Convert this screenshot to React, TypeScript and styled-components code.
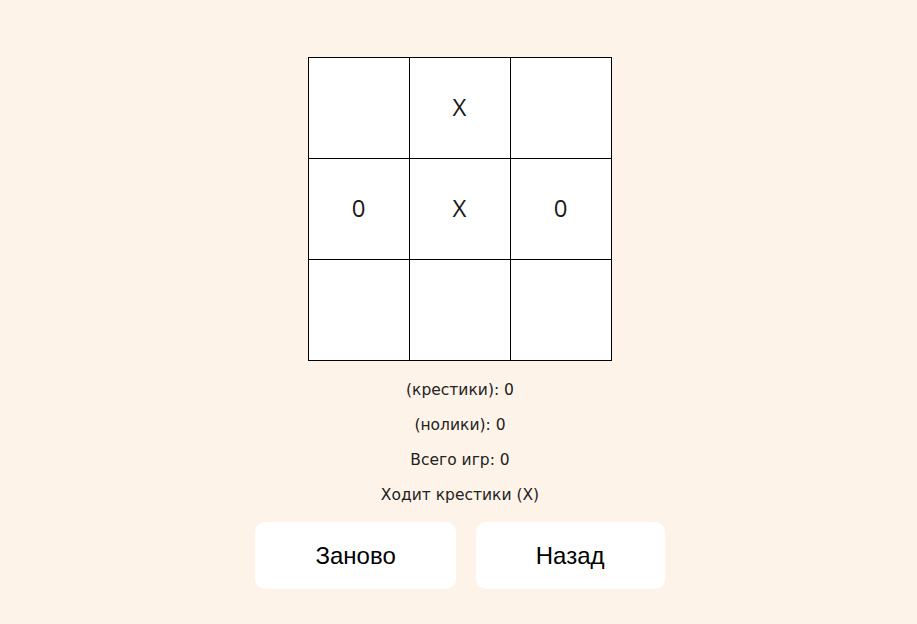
import React, { useState } from 'react';
import styled, { createGlobalStyle } from 'styled-components';

const GlobalStyle = createGlobalStyle`
  html, body {
    margin: 0;
    padding: 0;
    background-color: #fef3e9;
  }
`;

type Mark = 'X' | '0' | null;

const initialBoard: Mark[] = [null, 'X', null, '0', 'X', '0', null, null, null];

const App = () => {
  const [board] = useState<Mark[]>(initialBoard);

  return (
    <Container>
      <GlobalStyle />
      <Board>
        {board.map((cell, i) => (
          <Cell key={i}>{cell}</Cell>
        ))}
      </Board>
      <Stats>
        <StatLine>(крестики): 0</StatLine>
        <StatLine>(нолики): 0</StatLine>
        <StatLine>Всего игр: 0</StatLine>
        <StatLine>Ходит крестики (X)</StatLine>
      </Stats>
      <ButtonRow>
        <ActionButton type="button">Заново</ActionButton>
        <ActionButton type="button">Назад</ActionButton>
      </ButtonRow>
    </Container>
  );
};

export default App;

const Container = styled.div`
  padding: 57px 0 0 3px;
  display: flex;
  flex-direction: column;
  align-items: center;
`;

const Board = styled.div`
  display: grid;
  grid-template-columns: repeat(3, 100px);
  grid-template-rows: repeat(3, 100px);
  gap: 1px;
  padding: 1px;
  margin-right: 1px;
  background-color: #000;
`;

const Cell = styled.div`
  display: flex;
  justify-content: center;
  align-items: center;
  padding-bottom: 4px;
  background-color: #fff;
  font-family: 'Open Sans', sans-serif;
  font-size: 24px;
  font-weight: 400;
  color: #1a1a1a;
`;

const Stats = styled.div`
  margin-top: 12px;
  display: flex;
  flex-direction: column;
  align-items: center;
`;

const StatLine = styled.p`
  margin: 0;
  line-height: 35px;
  font-family: 'DejaVu Sans', sans-serif;
  font-size: 15.5px;
  color: #222;
`;

const ButtonRow = styled.div`
  margin-top: 9px;
  display: flex;
  gap: 20px;
`;

const ActionButton = styled.button`
  height: 67px;
  padding: 0 60px;
  border: none;
  border-radius: 10px;
  background-color: #fff;
  font-family: 'Liberation Sans', Arial, sans-serif;
  font-size: 24px;
  color: #000;
  cursor: pointer;
`;
